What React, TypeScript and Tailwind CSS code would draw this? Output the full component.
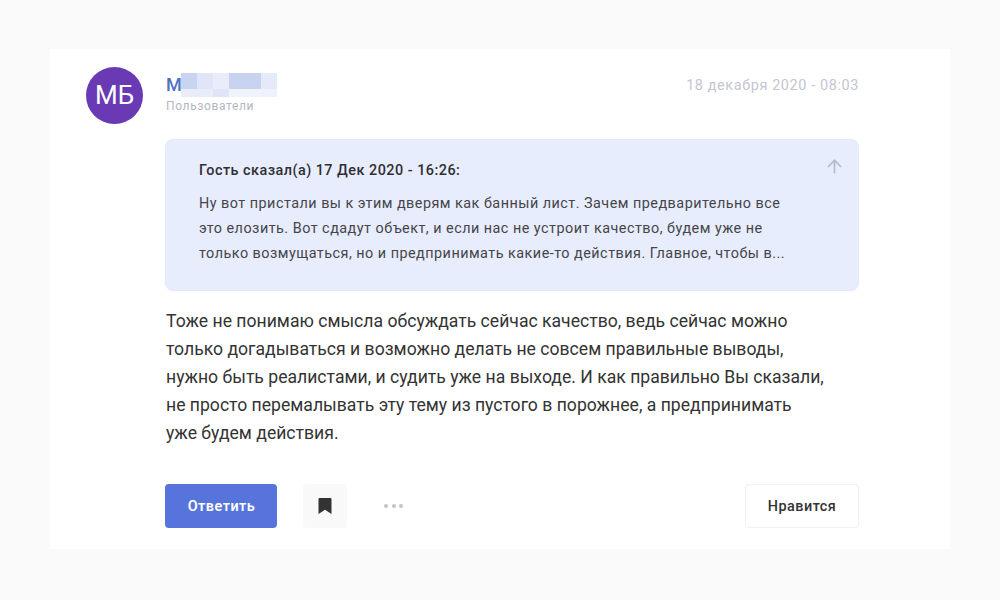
import { ArrowUp } from 'lucide-react';

const mosaicTop = ['#c9d4f1', '#e0e6f7', '#e9edfa', '#c8d3f1', '#c8d3f1', '#e5eafa'];
const mosaicBottom = ['#e9edfa', '#e9edfa', '#dfe5f7', '#f0f3fc', '#f0f3fc', '#eef1fb'];

function Mosaic() {
  return (
    <div className="flex flex-col">
      <div className="flex h-4">
        {mosaicTop.map((c, i) => (
          <div key={i} className="w-4" style={{ backgroundColor: c }} />
        ))}
      </div>
      <div className="flex h-2">
        {mosaicBottom.map((c, i) => (
          <div key={i} className="w-4" style={{ backgroundColor: c }} />
        ))}
      </div>
    </div>
  );
}

export default function App() {
  return (
    <div className="w-[1000px] h-[600px] bg-[#fafafa] pt-[49px] px-[50px] font-['Roboto',sans-serif] overflow-hidden">
      <div className="h-[500px] w-[900px] bg-white pl-[36px] pr-[91px] pt-[18px] flex gap-[23px]">
        <div className="w-[57px] h-[57px] rounded-full bg-[#6a3ab5] text-white text-[26px] flex items-center justify-center shrink-0">
          МБ
        </div>
        <div className="flex-1">
          <div className="flex justify-between h-[54px]">
            <div className="pt-[6px]">
              <div className="flex items-start h-[24px]">
                <span className="text-[#4e6fc4] text-[18px] font-medium leading-[24px] w-[15px]">М</span>
                <Mosaic />
              </div>
              <div className="text-[12px] leading-[16px] text-[#b3b6c2] tracking-[0.63px] mt-[1px]">Пользователи</div>
            </div>
            <div className="text-[14.4px] leading-[20px] tracking-[0.63px] text-[#c3c6d1] pt-[9px]">18 декабря 2020 - 08:03</div>
          </div>

          <div className="relative h-[152px] mt-[18px] -ml-px bg-[#e8edfd] border border-[#e2e8fa] rounded-[8px] pl-[33px] pt-[21px]">
            <ArrowUp className="absolute top-[16px] right-[13px] w-[21px] h-[21px] text-[#b4bad2]" strokeWidth={2} />
            <div className="text-[14.4px] leading-[20px] font-medium tracking-[0.48px] text-[#2f2f33]">Гость сказал(а) 17 Дек 2020 - 16:26:</div>
            <p className="mt-[10px] text-[14.4px] leading-[25px] tracking-[0.48px] text-[#45454a] whitespace-nowrap">
              Ну вот пристали вы к этим дверям как банный лист. Зачем предварительно все<br />
              это елозить. Вот сдадут объект, и если нас не устроит качество, будем уже не<br />
              только возмущаться, но и предпринимать какие-то действия. Главное, чтобы в...
            </p>
          </div>

          <p className="mt-[16px] text-[17.6px] leading-[28px] text-[#333333] whitespace-nowrap">
            Тоже не понимаю смысла обсуждать сейчас качество, ведь сейчас можно<br />
            только догадываться и возможно делать не совсем правильные выводы,<br />
            нужно быть реалистами, и судить уже на выходе. И как правильно Вы сказали,<br />
            не просто перемалывать эту тему из пустого в порожнее, а предпринимать<br />
            уже будем действия.
          </p>

          <div className="mt-[37px] flex items-center">
            <button className="w-[112px] h-[44px] -ml-px pt-px pl-px rounded-[4px] bg-[#5674db] text-white text-[14.4px] font-semibold tracking-[0.5px]">Ответить</button>
            <button className="ml-[26px] w-[44px] h-[44px] rounded-[4px] bg-[#f9f9f9] flex items-center justify-center">
              <svg width="14" height="16" viewBox="0 0 14 16" className="fill-[#333333]">
                <path d="M0.5 1a1 1 0 0 1 1-1h11a1 1 0 0 1 1 1v15l-6.5-4.2L0.5 16z" />
              </svg>
            </button>
            <div className="ml-[37px] flex gap-[3.5px]">
              <span className="w-[4px] h-[4px] rounded-full bg-[#c4c4c4]" />
              <span className="w-[4px] h-[4px] rounded-full bg-[#c4c4c4]" />
              <span className="w-[4px] h-[4px] rounded-full bg-[#c4c4c4]" />
            </div>
            <button className="ml-auto w-[114px] h-[44px] pt-px rounded-[4px] bg-white border border-[#f0f0f2] text-[14.4px] font-medium tracking-[0.5px] text-[#333333]">Нравится</button>
          </div>
        </div>
      </div>
    </div>
  );
}
